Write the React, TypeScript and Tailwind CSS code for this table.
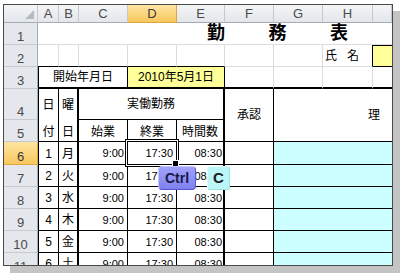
import React from "react";

const R: Record<string, string> = {
  g: "border-r border-r-[#dadcdd]",
  k: "border-r border-r-black",
  K: "border-r-2 border-r-black",
  n: "",
};
const B: Record<string, string> = {
  g: "border-b border-b-[#dadcdd]",
  k: "border-b border-b-black",
  K: "border-b-2 border-b-black",
  n: "",
};

const FONT = "font-['Liberation_Sans','Noto_Sans_CJK_JP',sans-serif]";

function Cell({
  r = "g",
  b = "g",
  left = false,
  className = "",
  children,
}: {
  r?: string;
  b?: string;
  left?: boolean;
  className?: string;
  children?: React.ReactNode;
}) {
  return (
    <div className={`flex items-center ${R[r]} ${B[b]} ${left ? "border-l border-l-black" : ""} ${className}`}>
      {children}
    </div>
  );
}

function ColHead({ label, active = false }: { label: string; active?: boolean }) {
  return active ? (
    <div className="flex items-center justify-center border-r border-b border-r-[#e2a640] border-b-[#e2a640] bg-gradient-to-b from-[#fde5a0] to-[#f9c75c] text-[13px] text-[#3a3a3a]">
      {label}
    </div>
  ) : (
    <div className="flex items-center justify-center border-r border-b border-r-[#c6cad0] border-b-[#a3abb6] bg-gradient-to-b from-[#f4f5f7] to-[#e3e6ea] text-[13px] text-[#4a4a4a]">
      {label}
    </div>
  );
}

function RowHead({ n, active = false }: { n: number; active?: boolean }) {
  return active ? (
    <div className="flex items-end justify-center border-r border-b border-r-[#e2a640] border-b-[#e2a640] bg-gradient-to-b from-[#fde5a0] to-[#f9c75c] text-[13px] leading-[15px] text-[#3a3a3a]">
      {n}
    </div>
  ) : (
    <div className="flex items-end justify-center border-r border-b border-r-[#a3abb6] border-b-[#c6cad0] bg-[#e4e7ec] text-[13px] leading-[15px] text-[#4a4a4a]">
      {n}
    </div>
  );
}

const DAYS = [
  { n: 1, wd: "月" },
  { n: 2, wd: "火" },
  { n: 3, wd: "水" },
  { n: 4, wd: "木" },
  { n: 5, wd: "金" },
  { n: 6, wd: "土" },
];

export default function App() {
  return (
    <div className={`h-[274px] w-[400px] overflow-hidden bg-white pl-[3px] pt-[4px] ${FONT}`}>
      <div className="relative h-[262px] w-[390px] overflow-hidden border border-[#4a4a4a] bg-white shadow-[7px_7px_0_#c4c4c4]">
        <div className="grid grid-cols-[34px_21px_20px_49px_49px_48px_49px_49px_50px_19px] grid-rows-[18px_22px_22px_22px_31px_22px_23px_22px_22px_22px_22px_22px] text-[12px] text-black">
          {/* column headers */}
          <div className="relative border-r border-b border-r-[#c6cad0] border-b-[#a3abb6] bg-gradient-to-b from-[#f4f5f7] to-[#e3e6ea]">
            <svg className="absolute right-[3px] bottom-[3px]" width="9" height="9" viewBox="0 0 9 9">
              <polygon points="9,0 9,9 0,9" fill="#b5bac1" />
            </svg>
          </div>
          <ColHead label="A" />
          <ColHead label="B" />
          <ColHead label="C" />
          <ColHead label="D" active />
          <ColHead label="E" />
          <ColHead label="F" />
          <ColHead label="G" />
          <ColHead label="H" />
          <ColHead label="" />

          {/* row 1 : title */}
          <RowHead n={1} />
          <div className="col-span-9 flex items-end border-b border-b-[#dadcdd] pb-[1px]">
            <div className="ml-[169px] flex w-[141px] justify-between text-[18px] font-bold leading-[20px]">
              <span>勤</span>
              <span>務</span>
              <span>表</span>
            </div>
          </div>

          {/* row 2 : name */}
          <RowHead n={2} />
          <Cell b="k" />
          <Cell b="k" />
          <Cell b="k" />
          <Cell b="k" />
          <Cell b="k" />
          <Cell />
          <Cell />
          <Cell r="k" className="items-end gap-[10px] pb-[1px] pl-[2px]">
            <span>氏</span>
            <span>名</span>
          </Cell>
          <Cell r="n" b="k" className="bg-[#ffff99] shadow-[inset_0_1px_0_black]" />

          {/* row 3 : start date */}
          <RowHead n={3} />
          <Cell left r="k" b="K" className="col-span-3 justify-center">
            開始年月日
          </Cell>
          <Cell r="k" b="K" className="col-span-2 justify-center bg-[#ffff99]">
            2010年5月1日
          </Cell>
          <Cell b="K" />
          <Cell b="K" />
          <Cell b="K" />
          <Cell r="n" b="K" />

          {/* row 4 / 5 : table head */}
          <RowHead n={4} />
          <Cell left r="k" b="n" className="justify-center">日</Cell>
          <Cell r="K" b="n" className="justify-center">曜</Cell>
          <Cell r="K" b="k" className="col-span-3 justify-center">実働勤務</Cell>
          <Cell r="k" b="k" className="row-span-2 justify-center">承認</Cell>
          <Cell r="n" b="k" className="col-span-3 row-span-2 pl-[94px]">理</Cell>

          <RowHead n={5} />
          <Cell left r="k" b="k" className="justify-center pt-[2px]">付</Cell>
          <Cell r="K" b="k" className="justify-center pt-[2px]">日</Cell>
          <Cell r="k" b="k" className="justify-center pt-[2px]">始業</Cell>
          <Cell r="k" b="k" className="justify-center pt-[2px]">終業</Cell>
          <Cell r="K" b="k" className="justify-center pt-[2px]">時間数</Cell>

          {/* data rows */}
          {DAYS.map((d, i) => (
            <React.Fragment key={d.n}>
              <RowHead n={6 + i} active={i === 0} />
              <Cell left r="k" b="k" className="justify-center pt-[1px] text-[12px]">{d.n}</Cell>
              <Cell r="K" b="k" className="justify-center pt-[1px]">{d.wd}</Cell>
              <Cell r="k" b="k" className="justify-end pt-[1px] pr-[3px] text-[11px]">9:00</Cell>
              <Cell r="k" b="k" className="justify-end pt-[1px] pr-[3px] text-[11px]">17:30</Cell>
              <Cell r="K" b="k" className="justify-end pt-[1px] pr-[1px] text-[11px]">08:30</Cell>
              <Cell r="k" b="k" />
              <Cell r="n" b="k" className="col-span-3 bg-[#ccffff]" />
            </React.Fragment>
          ))}
        </div>

        {/* active cell frame + fill handle */}
        <div className="absolute left-[121px] top-[134px] h-[28px] w-[54px] border border-black shadow-[inset_0_0_0_1px_white]" />
        <div className="absolute left-[168px] top-[155px] h-[7px] w-[7px] border border-white bg-black" />

        {/* key overlays */}
        <div className="absolute left-[154px] top-[161px] flex h-[24px] w-[38px] items-center justify-center rounded-[4px] border border-t-[#c4c4ff] border-l-[#c4c4ff] border-r-[#5656cc] border-b-[#5656cc] bg-gradient-to-b from-[#a2a2fc] to-[#8080f0] font-['Liberation_Sans',sans-serif] text-[14px] font-bold text-[#1a1a48]">
          Ctrl
        </div>
        <div className="absolute left-[203px] top-[161px] flex h-[24px] w-[23px] items-center justify-center rounded-[3px] border border-t-[#e4ffff] border-l-[#e4ffff] border-r-[#98e2e2] border-b-[#98e2e2] bg-[#bdf6f6] font-['Liberation_Sans',sans-serif] text-[15px] font-bold text-[#1a2020]">
          C
        </div>
      </div>
    </div>
  );
}
